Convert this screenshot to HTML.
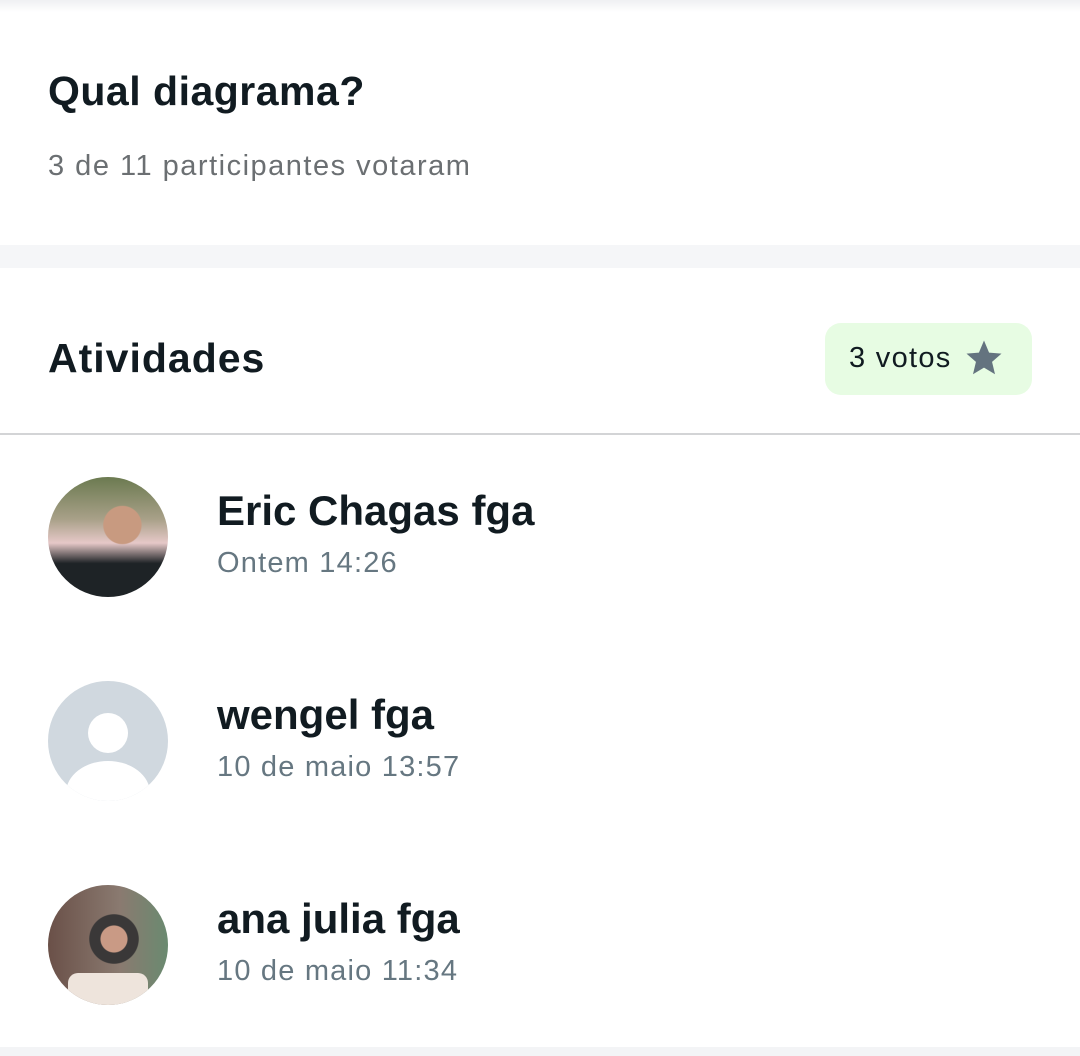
<!DOCTYPE html>
<html><head><meta charset="utf-8"><style>
*{margin:0;padding:0;box-sizing:border-box}
body{width:1080px;height:1056px;background:#fff;font-family:"Liberation Sans",sans-serif;position:relative;overflow:hidden}
.a{position:absolute;white-space:nowrap}
.top{left:0;top:0;width:1080px;height:12px;background:linear-gradient(#eff0f2,#fff)}
.gap{left:0;top:245px;width:1080px;height:23px;background:#f5f6f8}
.div{left:0;top:433px;width:1080px;height:2px;background:#d3d4d6}
.bot{left:0;top:1047px;width:1080px;height:9px;background:#f3f4f6}
.h{color:#111b21;font-size:41px;font-weight:bold;letter-spacing:0.5px}
.s{color:#6b6f72;font-size:29px;letter-spacing:1.5px}
.n{color:#111b21;font-size:42px;left:217px;font-weight:bold}
.t{color:#667781;font-size:29px;left:217px;letter-spacing:1.2px}
.av{left:48px;width:120px;height:120px;border-radius:50%;overflow:hidden}
.badge{left:825px;top:323px;width:207px;height:72px;background:#e7fce3;border-radius:16px}
</style></head><body>
<div class="a top"></div>
<div class="a h" style="left:48px;top:68px">Qual diagrama?</div>
<div class="a s" style="left:48px;top:150px">3 de 11 participantes votaram</div>
<div class="a gap"></div>
<div class="a h" style="left:48px;top:335px;letter-spacing:1px">Atividades</div>
<div class="a badge"></div>
<div class="a" style="left:849px;top:342px;font-size:29px;color:#111b21;letter-spacing:1.3px">3 votos</div>
<svg class="a" style="left:963px;top:337px" width="42" height="42" viewBox="0 0 24 24"><path fill="#64737f" d="M12 2l2.9 6.9 7.1.6-5.4 4.7 1.7 7.1L12 17.5 5.7 21.3l1.7-7.1L2 9.5l7.1-.6z"/></svg>
<div class="a div"></div>

<div class="a av" style="top:477px;background:radial-gradient(circle at 62% 40%,#c89a80 0 18%,transparent 19%),linear-gradient(#6b7a50 0,#a8a088 35%,#e6c8c8 55%,#1e2326 72%)"></div>
<div class="a n" style="top:487px">Eric Chagas fga</div>
<div class="a t" style="top:547px">Ontem 14:26</div>

<div class="a av" style="top:681px;background:#d0d8df">
<svg width="120" height="120" viewBox="0 0 120 120"><circle cx="60" cy="52" r="20" fill="#fff"/><ellipse cx="60" cy="112" rx="42" ry="32" fill="#fff"/></svg></div>
<div class="a n" style="top:691px">wengel fga</div>
<div class="a t" style="top:751px">10 de maio 13:57</div>

<div class="a av" style="top:885px;background:radial-gradient(circle at 55% 45%,#c99a85 0 14%,#3a3838 15% 26%,transparent 27%),linear-gradient(90deg,#6a5048,#8a7a70 60%,#6a8a70);">
<div style="position:absolute;left:20px;top:88px;width:80px;height:40px;background:#eee4dc;border-radius:10px"></div></div>
<div class="a n" style="top:895px">ana julia fga</div>
<div class="a t" style="top:955px">10 de maio 11:34</div>
<div class="a bot"></div>
</body></html>
